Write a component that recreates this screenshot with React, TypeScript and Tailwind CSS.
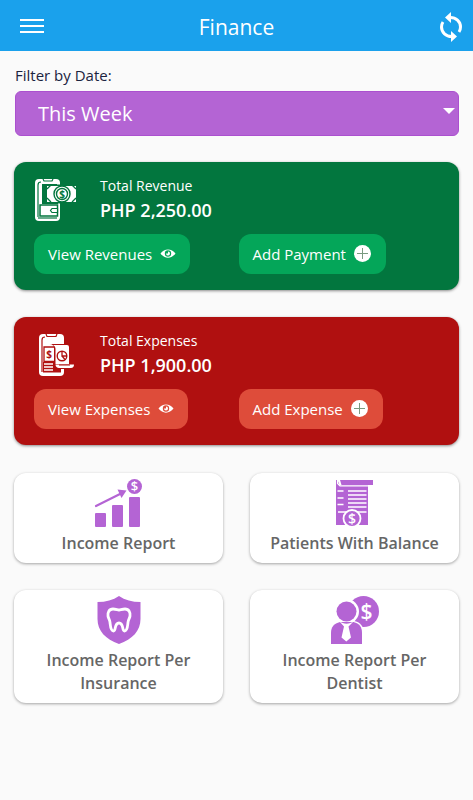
import type { ReactNode } from "react";

// -----------------------------------------------------------------------------
// Page
// -----------------------------------------------------------------------------
export default function App() {
  return (
    <div className="min-h-screen bg-[#fafafa] font-['Open_Sans','Noto_Sans',sans-serif]">
      <header className="grid h-[51px] grid-cols-[1fr_auto_1fr] items-center bg-[#1aa1ec] pr-2 pl-5 text-white">
        <button type="button" aria-label="Menu" className="w-6">
          <MenuIcon />
        </button>
        <h1 className="pt-0.5 pr-3 text-[21px] leading-6">Finance</h1>
        <button type="button" aria-label="Refresh" className="justify-self-end pt-0.5">
          <SyncIcon />
        </button>
      </header>

      <main className="px-3.5 pt-3 pb-8">
        <label htmlFor="range" className="block pl-px text-[15px] leading-6 text-[#1b2340]">
          Filter by Date:
        </label>
        <div className="relative mt-1 pl-px">
          <select
            id="range"
            defaultValue="week"
            className="h-[45px] w-full appearance-none rounded-md border border-[#ab50cf] bg-[#b464d4] pr-8 pl-[22px] text-[20px] text-white"
          >
            <option value="today">Today</option>
            <option value="week">This Week</option>
            <option value="month">This Month</option>
          </select>
          <svg viewBox="0 0 12 6" className="pointer-events-none absolute top-[17px] right-1 h-1.5 w-3" fill="white">
            <path d="M0 0h12L6 6z" />
          </svg>
        </div>

        <div className="mt-[26px] flex flex-col gap-7">
          <div className="flex flex-col gap-[27px]">
            <SummaryCard
              tone="bg-[#02763e]"
              buttonTone="bg-[#04a659]"
              icon={<RevenueIcon />}
              label="Total Revenue"
              amount="PHP 2,250.00"
              viewText="View Revenues"
              addText="Add Payment"
            />
            <SummaryCard
              tone="bg-[#b01010]"
              buttonTone="bg-[#de4c3a]"
              icon={<ExpenseIcon />}
              label="Total Expenses"
              amount="PHP 1,900.00"
              viewText="View Expenses"
              addText="Add Expense"
            />
          </div>
          <div className="grid grid-cols-2 gap-[27px]">
            <ReportTile icon={<GrowthIcon />} text="Income Report" />
            <ReportTile icon={<StatementIcon />} text="Patients With Balance" />
            <ReportTile icon={<InsuranceIcon />} text="Income Report Per Insurance" />
            <ReportTile icon={<DentistIcon />} text="Income Report Per Dentist" />
          </div>
        </div>
      </main>
    </div>
  );
}

// -----------------------------------------------------------------------------
// Cards
// -----------------------------------------------------------------------------
interface SummaryCardProps {
  tone: string;
  buttonTone: string;
  icon: ReactNode;
  label: string;
  amount: string;
  viewText: string;
  addText: string;
}

function SummaryCard({ tone, buttonTone, icon, label, amount, viewText, addText }: SummaryCardProps) {
  return (
    <section className={`rounded-xl px-5 pt-3 pb-4 text-white shadow-[0_1px_3px_rgba(0,0,0,0.45)] ${tone}`}>
      <div className="flex items-end gap-6">
        {icon}
        <div>
          <h2 className="text-[14px] leading-6">{label}</h2>
          <p className="text-[18px] leading-6 font-semibold">{amount}</p>
        </div>
      </div>
      <div className="mt-3 grid grid-cols-2 gap-1">
        <CardButton tone={buttonTone} text={viewText} icon={<EyeIcon />} />
        <CardButton tone={buttonTone} text={addText} icon={<PlusIcon />} />
      </div>
    </section>
  );
}

function CardButton({ tone, text, icon }: { tone: string; text: string; icon: ReactNode }) {
  return (
    <button
      type="button"
      className={`flex h-10 items-center gap-2 justify-self-start rounded-xl px-3.5 text-[15px] whitespace-nowrap ${tone}`}
    >
      {text}
      {icon}
    </button>
  );
}

function ReportTile({ icon, text }: { icon: ReactNode; text: string }) {
  return (
    <button
      type="button"
      className="flex flex-col items-center gap-[5px] rounded-xl bg-white px-4 pt-1.5 pb-2 text-[16px] leading-[23px] font-semibold text-[#666] shadow-[0_1px_3px_rgba(0,0,0,0.35)]"
    >
      {icon}
      <span>{text}</span>
    </button>
  );
}

// -----------------------------------------------------------------------------
// Icons
// -----------------------------------------------------------------------------
function MenuIcon() {
  return (
    <svg viewBox="0 0 24 16" className="h-4 w-6" fill="white">
      <path d="M0 1h24v2H0zM0 7h24v2H0zM0 13h24v2H0z" />
    </svg>
  );
}

function SyncIcon() {
  return (
    <svg viewBox="0 0 28 32" className="h-8 w-7" fill="none" stroke="white" strokeWidth="3">
      <path d="M13 6.500c6-.2 10.500 4.200 10.500 9.500 0 2-.6 3.700-1.500 5" />
      <path d="M15 25.500C9 25.700 4.500 21.300 4.500 16c0-2 .6-3.700 1.500-5" />
      <path d="M14 1v11L8 6.500zM14 20v11l6-5.500z" fill="white" stroke="none" />
    </svg>
  );
}

function EyeIcon() {
  return (
    <svg viewBox="0 0 16 12" className="h-3 w-4" fill="white">
      <path
        fillRule="evenodd"
        d="M.5 5.500c4-5.500 11-5.500 15 0-4 5.500-11 5.500-15 0zM4.800 5.500a3.200 3.200 0 1 0 6.400 0 3.200 3.200 0 1 0-6.400 0z"
      />
      <path d="M8 3.500v2H6a2 2 0 1 0 2-2z" />
    </svg>
  );
}

function PlusIcon() {
  return (
    <svg viewBox="0 0 18 18" className="h-[18px] w-[18px]">
      <circle cx="8.500" cy="8.500" r="8.500" fill="white" />
      <path d="M8.500 3v11M3 8.500h11" stroke="currentColor" className="text-[#7a9a80]" />
    </svg>
  );
}

function RevenueIcon() {
  return (
    <svg viewBox="0 0 42 44" className="h-11 w-[42px] shrink-0">
      {/* phone */}
      <rect x="1" y="1" width="25" height="42" rx="4" fill="white" />
      <path d="M9 1l1 2h8l1-2" fill="none" stroke="#02763e" strokeWidth="1.200" />
      <path d="M4 39V7c0-2 1-3 3-3" fill="none" stroke="#02763e" strokeWidth="1.200" />
      <path d="M8 6h15v1H13v18h11v1H8z" fill="#02763e" />
      <path d="M4 40h19" stroke="#02763e" strokeWidth="1.200" />
      {/* banknote */}
      <path d="M11.500 6.500H42v19H11.500z" fill="#02763e" />
      <path d="M13 8h29v16H13z" fill="white" />
      <path d="M17 7l-4 4M38 7l4 4M13 20l4 4M42 20l-4 4" stroke="#02763e" strokeWidth="1.300" />
      <circle cx="28" cy="16" r="8" fill="white" stroke="#02763e" strokeWidth="1.400" />
      <circle cx="28" cy="16" r="5.500" fill="white" stroke="#02763e" strokeWidth="1.400" />
      <text x="28" y="19.500" textAnchor="middle" fontSize="10" fontWeight="700" fill="#02763e">$</text>
      {/* wallet */}
      <path d="M6 27h17.500v11H6z" fill="white" stroke="#02763e" strokeWidth="1.500" />
      <path d="M23.500 30.500H18l-1.500 2 1.500 2h5.500z" fill="white" stroke="#02763e" strokeWidth="1.200" />
    </svg>
  );
}

function ExpenseIcon() {
  return (
    <svg viewBox="0 0 42 44" className="h-11 w-[42px] shrink-0">
      {/* phone */}
      <rect x="5" y="1" width="25" height="42" rx="4" fill="white" />
      <path d="M12 1l1 2.500h9L23 1" fill="none" stroke="#b01010" strokeWidth="1.200" />
      <path d="M8 39V7c0-2 1-3 3-3" fill="none" stroke="#b01010" strokeWidth="1.200" />
      <path d="M9 29h18v10.500H9z" fill="#b01010" />
      {/* bill behind the sheet */}
      <path d="M10 14h11v14.500H10z" fill="white" stroke="#b01010" strokeWidth="1.300" />
      <text x="15.200" y="24.500" textAnchor="middle" fontSize="10" fontWeight="700" fill="#b01010">$</text>
      <path d="M10 31h9M10 34h9M10 37h9" stroke="white" strokeWidth="1.500" />
      {/* report sheet */}
      <path d="M15.500 11H34c1.500 0 2 1 2 2.500V31h4.500c0 3-1 5-3.500 5H24c-2.500 0-4-1.500-4-4V15c0-2-1.500-4-4.500-4z" fill="#b01010" />
      <path d="M17 12h16a2 2 0 0 1 2 2v17H21.500V16c0-2-1-4-4.500-4z" fill="white" />
      <path d="M21.500 31.500H40c0 2-1 3.500-3 3.500H25c-2 0-3.500-1.500-3.500-3.500z" fill="white" />
      <path d="M25 32h11" stroke="#b01010" />
      <circle cx="28" cy="23" r="4.800" fill="none" stroke="#b01010" strokeWidth="1.400" />
      <path d="M28 18v5h5M28 23l3 3.500" fill="none" stroke="#b01010" strokeWidth="1.300" />
    </svg>
  );
}

function GrowthIcon() {
  return (
    <svg viewBox="0 0 48 48" className="size-12 overflow-visible" fill="#b464d4">
      <rect x="0" y="34" width="11" height="14" rx="1" />
      <rect x="17" y="26" width="11" height="22" rx="1" />
      <rect x="34" y="18" width="11" height="30" rx="1" />
      <path d="M1 27L26 14.500" stroke="#b464d4" strokeWidth="2.200" strokeLinecap="round" />
      <path d="M22.500 10.500l9 1-5 7.500z" />
      <circle cx="39.500" cy="7.500" r="7.500" />
      <text x="39.500" y="12" textAnchor="middle" fontSize="13" fontWeight="600" fill="white">$</text>
    </svg>
  );
}

function StatementIcon() {
  return (
    <svg viewBox="0 0 48 48" className="size-12 overflow-visible" fill="#b464d4">
      <path d="M5 1h1.500l2 5H37v40H5z" />
      <path d="M9 1h33v5H10.500z" />
      <path d="M6.500 1v3.500L9 6.800h28" fill="none" stroke="white" strokeWidth="1.200" />
      <path d="M6.500 12h6M6.500 19h6M6.500 25.500h6M17 12h18.500M17 16h18.500M17 20h18.500M17 24h18.500M17 28h18.500M7 33h28.500" stroke="white" strokeWidth="1.600" />
      <circle cx="21" cy="39.500" r="8.500" stroke="white" strokeWidth="1.800" />
      <text x="21" y="44.500" textAnchor="middle" fontSize="14" fontWeight="600" fill="white">$</text>
    </svg>
  );
}

function InsuranceIcon() {
  return (
    <svg viewBox="0 0 48 48" className="size-12" fill="#b464d4">
      <path d="M24 0c6 4 13 6 21.500 6v17c0 12-8 20-21.500 25C10.500 43 2.500 35 2.500 23V6C11 6 18 4 24 0z" />
      <path
        d="M24 14c-2-.3-3.500-1-6-1-4 0-5.500 3.500-5 7 .3 2.500 1.700 3.500 2 6.300.4 3.500.5 8.700 3.500 8.700 2.800 0 .5-8 5.500-8s2.700 8 5.500 8c3 0 3.100-5.200 3.500-8.700.3-2.800 1.700-3.800 2-6.300.5-3.500-1-7-5-7-2.500 0-4 .7-6 1z"
        fill="none"
        stroke="white"
        strokeWidth="2.800"
        strokeLinejoin="round"
      />
    </svg>
  );
}

function DentistIcon() {
  return (
    <svg viewBox="0 0 48 48" className="size-12" fill="#b464d4">
      <circle cx="32.500" cy="15.500" r="15.500" />
      <circle cx="15.500" cy="15.500" r="12.500" fill="white" />
      <path d="M0 48V38c0-8 4-12 10-13h13c6 1 10 5 10 13v10z" fill="white" />
      <circle cx="15.500" cy="15.500" r="10" />
      <path d="M0 48V37c0-6 3-9.500 9-11h13.500c6 1.500 8.500 5 8.500 11v11z" />
      <path d="M8 25c5 3.500 10 3.500 15 0l-5.500 5.500 2.500 11-4.700 4-4.800-4 2.500-11z" fill="white" />
      <text x="35.500" y="22.500" textAnchor="middle" fontSize="21" fontWeight="600" fill="white">$</text>
    </svg>
  );
}
